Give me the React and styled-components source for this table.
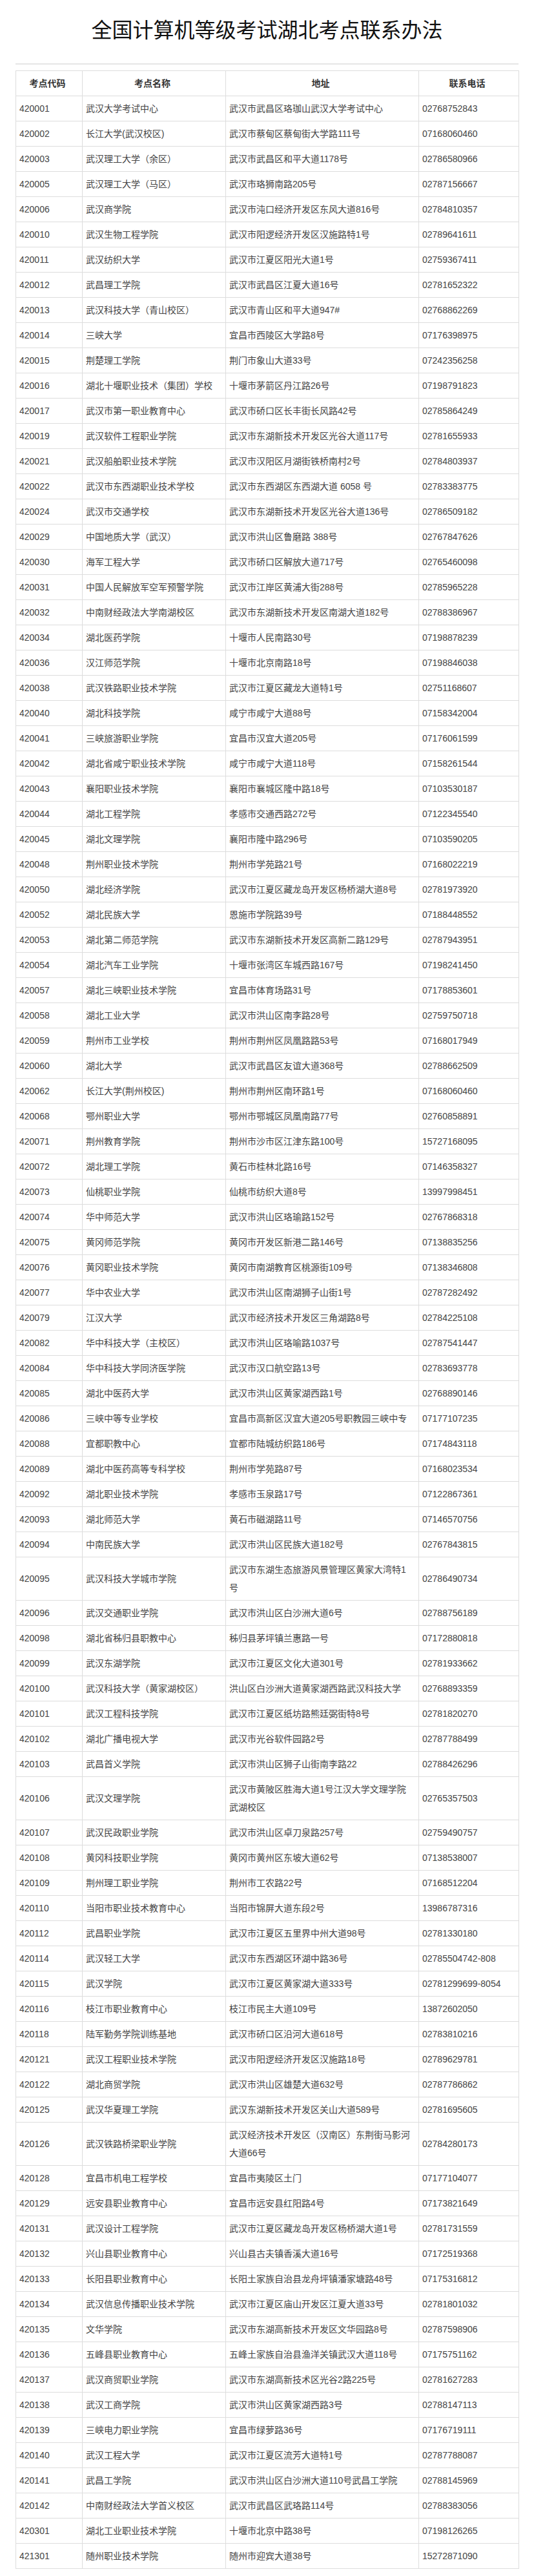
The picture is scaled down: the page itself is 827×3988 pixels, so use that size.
import React from "react";
import styled, { createGlobalStyle } from "styled-components";

const GlobalStyle = createGlobalStyle`
  html, body { margin: 0; padding: 0; background: #fff; }
  body { font-family: "Liberation Sans", "Noto Sans CJK SC", sans-serif; }
`;

const Page = styled.div`
  padding: 24px 24px 12px;
`;

const Title = styled.h1`
  margin: 0;
  font-size: 32px;
  line-height: 40px;
  font-weight: normal;
  color: #111;
  text-align: center;
  font-family: "Noto Sans CJK SC", sans-serif;
`;

const Divider = styled.hr`
  margin: 34px 0 9px;
  border: 0;
  height: 2px;
  background: #e6e6e6;
`;

const Table = styled.table`
  width: 100%;
  border-collapse: collapse;
  table-layout: fixed;
  border: 1px solid #ddd;
`;

const Col = styled.col`
  width: ${(p) => p.$w}px;
`;

const HeadCell = styled.th`
  border: 1px solid #ddd;
  padding: 5px 10px 5px 5px;
  line-height: 28px;
  font-size: 14px;
  font-weight: bold;
  color: #333;
  text-align: center;
  vertical-align: middle;
`;

const Cell = styled.td`
  border: 1px solid #ddd;
  padding: 5px 10px 5px 5px;
  line-height: 28px;
  font-size: 14px;
  color: #444;
  text-align: left;
  vertical-align: middle;
  word-break: break-all;
`;

const rows = [
  ["420001", "武汉大学考试中心", "武汉市武昌区珞珈山武汉大学考试中心", "02768752843"],
  ["420002", "长江大学(武汉校区)", "武汉市蔡甸区蔡甸街大学路111号", "07168060460"],
  ["420003", "武汉理工大学（余区）", "武汉市武昌区和平大道1178号", "02786580966"],
  ["420005", "武汉理工大学（马区）", "武汉市珞狮南路205号", "02787156667"],
  ["420006", "武汉商学院", "武汉市沌口经济开发区东风大道816号", "02784810357"],
  ["420010", "武汉生物工程学院", "武汉市阳逻经济开发区汉施路特1号", "02789641611"],
  ["420011", "武汉纺织大学", "武汉市江夏区阳光大道1号", "02759367411"],
  ["420012", "武昌理工学院", "武汉市武昌区江夏大道16号", "02781652322"],
  ["420013", "武汉科技大学（青山校区）", "武汉市青山区和平大道947#", "02768862269"],
  ["420014", "三峡大学", "宜昌市西陵区大学路8号", "07176398975"],
  ["420015", "荆楚理工学院", "荆门市象山大道33号", "07242356258"],
  ["420016", "湖北十堰职业技术（集团）学校", "十堰市茅箭区丹江路26号", "07198791823"],
  ["420017", "武汉市第一职业教育中心", "武汉市硚口区长丰街长风路42号", "02785864249"],
  ["420019", "武汉软件工程职业学院", "武汉市东湖新技术开发区光谷大道117号", "02781655933"],
  ["420021", "武汉船舶职业技术学院", "武汉市汉阳区月湖街铁桥南村2号", "02784803937"],
  ["420022", "武汉市东西湖职业技术学校", "武汉市东西湖区东西湖大道 6058 号", "02783383775"],
  ["420024", "武汉市交通学校", "武汉市东湖新技术开发区光谷大道136号", "02786509182"],
  ["420029", "中国地质大学（武汉）", "武汉市洪山区鲁磨路 388号", "02767847626"],
  ["420030", "海军工程大学", "武汉市硚口区解放大道717号", "02765460098"],
  ["420031", "中国人民解放军空军预警学院", "武汉市江岸区黄浦大街288号", "02785965228"],
  ["420032", "中南财经政法大学南湖校区", "武汉市东湖新技术开发区南湖大道182号", "02788386967"],
  ["420034", "湖北医药学院", "十堰市人民南路30号", "07198878239"],
  ["420036", "汉江师范学院", "十堰市北京南路18号", "07198846038"],
  ["420038", "武汉铁路职业技术学院", "武汉市江夏区藏龙大道特1号", "02751168607"],
  ["420040", "湖北科技学院", "咸宁市咸宁大道88号", "07158342004"],
  ["420041", "三峡旅游职业学院", "宜昌市汉宜大道205号", "07176061599"],
  ["420042", "湖北省咸宁职业技术学院", "咸宁市咸宁大道118号", "07158261544"],
  ["420043", "襄阳职业技术学院", "襄阳市襄城区隆中路18号", "07103530187"],
  ["420044", "湖北工程学院", "孝感市交通西路272号", "07122345540"],
  ["420045", "湖北文理学院", "襄阳市隆中路296号", "07103590205"],
  ["420048", "荆州职业技术学院", "荆州市学苑路21号", "07168022219"],
  ["420050", "湖北经济学院", "武汉市江夏区藏龙岛开发区杨桥湖大道8号", "02781973920"],
  ["420052", "湖北民族大学", "恩施市学院路39号", "07188448552"],
  ["420053", "湖北第二师范学院", "武汉市东湖新技术开发区高新二路129号", "02787943951"],
  ["420054", "湖北汽车工业学院", "十堰市张湾区车城西路167号", "07198241450"],
  ["420057", "湖北三峡职业技术学院", "宜昌市体育场路31号", "07178853601"],
  ["420058", "湖北工业大学", "武汉市洪山区南李路28号", "02759750718"],
  ["420059", "荆州市工业学校", "荆州市荆州区凤凰路路53号", "07168017949"],
  ["420060", "湖北大学", "武汉市武昌区友谊大道368号", "02788662509"],
  ["420062", "长江大学(荆州校区)", "荆州市荆州区南环路1号", "07168060460"],
  ["420068", "鄂州职业大学", "鄂州市鄂城区凤凰南路77号", "02760858891"],
  ["420071", "荆州教育学院", "荆州市沙市区江津东路100号", "15727168095"],
  ["420072", "湖北理工学院", "黄石市桂林北路16号", "07146358327"],
  ["420073", "仙桃职业学院", "仙桃市纺织大道8号", "13997998451"],
  ["420074", "华中师范大学", "武汉市洪山区珞瑜路152号", "02767868318"],
  ["420075", "黄冈师范学院", "黄冈市开发区新港二路146号", "07138835256"],
  ["420076", "黄冈职业技术学院", "黄冈市南湖教育区桃源街109号", "07138346808"],
  ["420077", "华中农业大学", "武汉市洪山区南湖狮子山街1号", "02787282492"],
  ["420079", "江汉大学", "武汉市经济技术开发区三角湖路8号", "02784225108"],
  ["420082", "华中科技大学（主校区）", "武汉市洪山区珞喻路1037号", "02787541447"],
  ["420084", "华中科技大学同济医学院", "武汉市汉口航空路13号", "02783693778"],
  ["420085", "湖北中医药大学", "武汉市洪山区黄家湖西路1号", "02768890146"],
  ["420086", "三峡中等专业学校", "宜昌市高新区汉宜大道205号职教园三峡中专", "07177107235"],
  ["420088", "宜都职教中心", "宜都市陆城纺织路186号", "07174843118"],
  ["420089", "湖北中医药高等专科学校", "荆州市学苑路87号", "07168023534"],
  ["420092", "湖北职业技术学院", "孝感市玉泉路17号", "07122867361"],
  ["420093", "湖北师范大学", "黄石市磁湖路11号", "07146570756"],
  ["420094", "中南民族大学", "武汉市洪山区民族大道182号", "02767843815"],
  ["420095", "武汉科技大学城市学院", "武汉市东湖生态旅游风景管理区黄家大湾特1号", "02786490734"],
  ["420096", "武汉交通职业学院", "武汉市洪山区白沙洲大道6号", "02788756189"],
  ["420098", "湖北省秭归县职教中心", "秭归县茅坪镇兰惠路一号", "07172880818"],
  ["420099", "武汉东湖学院", "武汉市江夏区文化大道301号", "02781933662"],
  ["420100", "武汉科技大学（黄家湖校区）", "洪山区白沙洲大道黄家湖西路武汉科技大学", "02768893359"],
  ["420101", "武汉工程科技学院", "武汉市江夏区纸坊路熊廷弼街特8号", "02781820270"],
  ["420102", "湖北广播电视大学", "武汉市光谷软件园路2号", "02787788499"],
  ["420103", "武昌首义学院", "武汉市洪山区狮子山街南李路22", "02788426296"],
  ["420106", "武汉文理学院", "武汉市黄陂区胜海大道1号江汉大学文理学院武湖校区", "02765357503"],
  ["420107", "武汉民政职业学院", "武汉市洪山区卓刀泉路257号", "02759490757"],
  ["420108", "黄冈科技职业学院", "黄冈市黄州区东坡大道62号", "07138538007"],
  ["420109", "荆州理工职业学院", "荆州市工农路22号", "07168512204"],
  ["420110", "当阳市职业技术教育中心", "当阳市锦屏大道东段2号", "13986787316"],
  ["420112", "武昌职业学院", "武汉市江夏区五里界中州大道98号", "02781330180"],
  ["420114", "武汉轻工大学", "武汉市东西湖区环湖中路36号", "02785504742-808"],
  ["420115", "武汉学院", "武汉市江夏区黄家湖大道333号", "02781299699-8054"],
  ["420116", "枝江市职业教育中心", "枝江市民主大道109号", "13872602050"],
  ["420118", "陆军勤务学院训练基地", "武汉市硚口区沿河大道618号", "02783810216"],
  ["420121", "武汉工程职业技术学院", "武汉市阳逻经济开发区汉施路18号", "02789629781"],
  ["420122", "湖北商贸学院", "武汉市洪山区雄楚大道632号", "02787786862"],
  ["420125", "武汉华夏理工学院", "武汉东湖新技术开发区关山大道589号", "02781695605"],
  ["420126", "武汉铁路桥梁职业学院", "武汉经济技术开发区（汉南区）东荆街马影河大道66号", "02784280173"],
  ["420128", "宜昌市机电工程学校", "宜昌市夷陵区土门", "07177104077"],
  ["420129", "远安县职业教育中心", "宜昌市远安县红阳路4号", "07173821649"],
  ["420131", "武汉设计工程学院", "武汉市江夏区藏龙岛开发区杨桥湖大道1号", "02781731559"],
  ["420132", "兴山县职业教育中心", "兴山县古夫镇香溪大道16号", "07172519368"],
  ["420133", "长阳县职业教育中心", "长阳土家族自治县龙舟坪镇潘家塘路48号", "07175316812"],
  ["420134", "武汉信息传播职业技术学院", "武汉市江夏区庙山开发区江夏大道33号", "02781801032"],
  ["420135", "文华学院", "武汉市东湖高新技术开发区文华园路8号", "02787598906"],
  ["420136", "五峰县职业教育中心", "五峰土家族自治县渔洋关镇武汉大道118号", "07175751162"],
  ["420137", "武汉商贸职业学院", "武汉市东湖高新技术区光谷2路225号", "02781627283"],
  ["420138", "武汉工商学院", "武汉市洪山区黄家湖西路3号", "02788147113"],
  ["420139", "三峡电力职业学院", "宜昌市绿萝路36号", "07176719111"],
  ["420140", "武汉工程大学", "武汉市江夏区流芳大道特1号", "02787788087"],
  ["420141", "武昌工学院", "武汉市洪山区白沙洲大道110号武昌工学院", "02788145969"],
  ["420142", "中南财经政法大学首义校区", "武汉市武昌区武珞路114号", "02788383056"],
  ["420301", "湖北工业职业技术学院", "十堰市北京中路38号", "07198126265"],
  ["421301", "随州职业技术学院", "随州市迎宾大道38号", "15272871090"],
];

const widths = [103, 222, 299, 155];
const headers = ["考点代码", "考点名称", "地址", "联系电话"];

export default function App() {
  return (
    <>
      <GlobalStyle />
      <Page>
        <Title>全国计算机等级考试湖北考点联系办法</Title>
        <Divider />
        <Table>
          <colgroup>
            {widths.map((w, i) => (
              <Col key={i} $w={w} />
            ))}
          </colgroup>
          <thead>
            <tr>
              {headers.map((h) => (
                <HeadCell key={h}>{h}</HeadCell>
              ))}
            </tr>
          </thead>
          <tbody>
            {rows.map((r) => (
              <tr key={r[0]}>
                {r.map((c, i) => (
                  <Cell key={i}>{c}</Cell>
                ))}
              </tr>
            ))}
          </tbody>
        </Table>
      </Page>
    </>
  );
}
